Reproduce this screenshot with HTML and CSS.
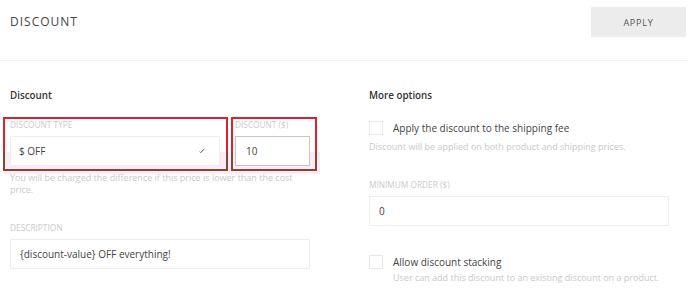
FILE: index.html
```html
<html>
    <head>
        <title>Discount</title>
        <meta charset="utf-8">
        <meta name="viewport" content="width=device-width, initial-scale=1">
        <link rel="stylesheet" href="styles.css">
    </head>
    <body>
        <div class="top-bar">
            <h4>Discount</h4>
            <button class="apply-button">Apply</button>
        </div>
        <div class="content">
            <div class="column">
                <h5>Discount</h5>
                <div class="field-row">
                    <div class="field type-field">
                        <label>Discount type</label>
                        <div class="input select">
                            <span>$ OFF</span>
                            <svg width="6" height="6" viewBox="0 0 6 6"><path d="M0.8 3.6 L1.8 4.6 L5 1.2" fill="none" stroke="#555" stroke-width="1"/></svg>
                        </div>
                    </div>
                    <div class="field amount-field">
                        <label>Discount ($)</label>
                        <div class="input dark">10</div>
                    </div>
                </div>
                <p class="help first-help">You will be charged the difference if this price is lower than the cost price.</p>
                <label class="spaced">Description</label>
                <div class="input">{discount-value} OFF everything!</div>
            </div>
            <div class="column">
                <h5>More options</h5>
                <div class="check-row first-check">
                    <span class="checkbox"></span>
                    <span class="check-text">Apply the discount to the shipping fee</span>
                </div>
                <p class="help">Discount will be applied on both product and shipping prices.</p>
                <label class="spaced">Minimum order ($)</label>
                <div class="input">0</div>
                <div class="check-row second-check">
                    <span class="checkbox"></span>
                    <div>
                        <span class="check-text">Allow discount stacking</span>
                        <p class="help">User can add this discount to an existing discount on a product.</p>
                    </div>
                </div>
            </div>
        </div>

        <!-- annotation marks drawn over the form -->
        <div class="mark-glow"></div>
        <div class="mark mark-type"></div>
        <div class="mark mark-type low"></div>
        <div class="mark mark-amount"></div>
        <div class="mark mark-amount low"></div>
    </body>
</html>
```

FILE: styles.css
```css
body {
    margin: 0;
    font-family: 'Open Sans', sans-serif;
    color: #444;
    background: #fff;
}

.top-bar {
    height: 60px;
    display: flex;
    justify-content: space-between;
    align-items: flex-start;
    border-bottom: 1px solid #f3f3f3;
}

.top-bar h4 {
    margin: 14px 0 0 10px;
    font-size: 12px;
    line-height: 16px;
    font-weight: normal;
    letter-spacing: 1px;
    text-transform: uppercase;
    color: #444;
}

.apply-button {
    margin: 7px 2px 0 0;
    width: 95px;
    height: 30px;
    border: none;
    background: #ececec;
    font-family: 'Open Sans', sans-serif;
    font-size: 9px;
    letter-spacing: 0.8px;
    text-transform: uppercase;
    color: #555;
    padding: 0;
}

.content {
    display: flex;
    gap: 59px;
    padding: 27px 10px 0 10px;
}

.column {
    width: 300px;
    display: flex;
    flex-direction: column;
}

h5 {
    margin: 0;
    font-size: 9.8px;
    line-height: 16px;
    font-weight: 600;
    color: #333;
}

label {
    display: block;
    font-size: 8.3px;
    line-height: 12px;
    text-transform: uppercase;
    color: #cacaca;
    margin-bottom: 5px;
}

label.spaced {
    margin-top: 26px;
}

.field-row {
    display: flex;
    gap: 15px;
    margin-top: 15px;
}

.type-field {
    width: 210px;
}

.amount-field {
    width: 75px;
}

.input {
    box-sizing: border-box;
    height: 30px;
    border: 1px solid #eee;
    padding: 0 9px;
    display: flex;
    align-items: center;
    font-size: 10px;
    color: #444;
    background: #fff;
}

.input.select {
    justify-content: space-between;
    padding: 0 14px 0 8px;
}

.input.dark {
    border-color: #c6c6c6;
    padding-left: 10px;
}

.help {
    margin: 6px 0 0 0;
    font-size: 9px;
    line-height: 12px;
    color: #c9c9c9;
}

.first-help {
    padding-right: 4px;
}

.check-row {
    display: flex;
    gap: 10px;
    align-items: center;
}

.first-check {
    margin-top: 17px;
}

.second-check {
    margin-top: 29px;
    align-items: flex-start;
}

.second-check .help {
    margin-top: 3px;
}

.checkbox {
    box-sizing: border-box;
    width: 14px;
    height: 14px;
    border: 1px solid #e8e8e8;
    flex-shrink: 0;
}

.check-text {
    display: block;
    font-size: 10px;
    line-height: 14px;
    color: #444;
}

.mark {
    position: absolute;
    box-sizing: border-box;
    border: 2px solid #e01f2b;
    top: 117px;
    height: 54px;
}

.mark.low {
    top: 152px;
    height: 19px;
    border-color: #7a4b2c;
    border-top: none;
}

.mark-type {
    left: 3px;
    width: 225px;
}

.mark-amount {
    left: 231px;
    width: 86px;
}

.mark-glow {
    position: absolute;
    z-index: -1;
    left: 4px;
    top: 152px;
    width: 316px;
    height: 22px;
    background: #fde9f8;
}
```
